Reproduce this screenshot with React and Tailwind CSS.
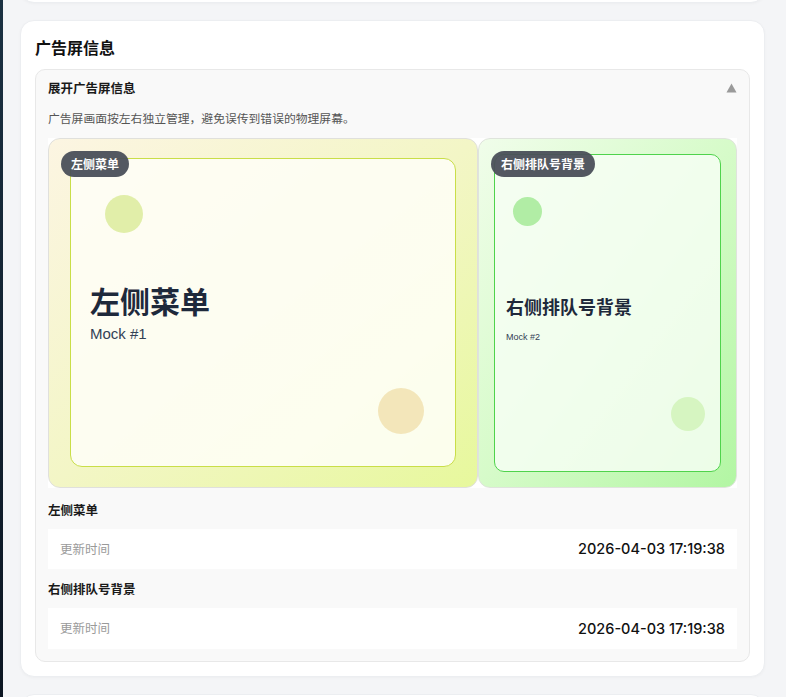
export default function App() {
  const cjk = { fontFamily: '"Noto Sans CJK SC", "Noto Sans", sans-serif' };
  return (
    <div className="flex min-h-[697px] w-[786px] overflow-hidden bg-[#f4f5f7]" style={cjk}>
      <div className="w-[3px] shrink-0 bg-gradient-to-b from-[#1b3142] to-[#0b1420]" />
      <div className="flex flex-1 flex-col gap-[17px] pl-[17px] pr-[21px]">
        <div className="-mt-[37px] h-[40px] rounded-[14px] border border-[#eceef1] bg-white shadow-[0_1px_3px_rgba(0,0,0,0.03)]" />
        <div className="rounded-[14px] border border-[#eceef1] bg-white px-[14px] pb-[14px] pt-[14px] shadow-[0_1px_3px_rgba(0,0,0,0.03)]">
          <div className="text-[16px] font-bold leading-[24px] text-[#111]">广告屏信息</div>
          <div className="mt-[10px] rounded-[10px] border border-[#e8e8e8] bg-[#f9f9f9] px-[12px] pb-[12px] pt-[10px]">
            <div className="flex items-center justify-between">
              <div className="text-[12.5px] font-bold leading-[16px] text-[#1a1a1a]">展开广告屏信息</div>
              <svg width="11" height="10" viewBox="0 0 11 10">
                <polygon points="5.5,0.5 10.5,9.5 0.5,9.5" fill="#9a9a9a" />
              </svg>
            </div>
            <div className="mt-[14px] text-[11.8px] leading-[16px] text-[#555]">
              广告屏画面按左右独立管理，避免误传到错误的物理屏幕。
            </div>
            <div className="mt-[12px] grid h-[350px] grid-cols-[430px_1fr] bg-white">
              {/* left panel */}
              <div className="relative rounded-[12px] border border-[#e0e0dc] bg-gradient-to-br from-[#fcf5e2] via-[#f3f6c6] to-[#e7f89c] px-[21px] pb-[20px] pt-[19px]">
                <div className="relative flex h-full flex-col justify-center overflow-hidden rounded-[12px] border-[1.5px] border-[#c9de48] bg-[#fefef5]/90 px-[19px]">
                  <div className="absolute left-[34px] top-[36px] h-[38px] w-[38px] rounded-full bg-[#e1eea9]" />
                  <div className="absolute bottom-[32px] right-[31px] h-[46px] w-[46px] rounded-full bg-[#f3e6ba]" />
                  <div className="relative text-[30px] font-bold leading-[36px] text-[#1e293b]">左侧菜单</div>
                  <div className="relative mt-[7px] text-[15px] leading-[18px] text-[#334155]" style={{ fontFamily: '"Liberation Sans", Arial, sans-serif' }}>
                    Mock #1
                  </div>
                </div>
                <div className="absolute left-[12px] top-[12px] rounded-full bg-[#4a4f58]/95 px-[10px] text-[12px] font-bold leading-[26px] text-white">
                  左侧菜单
                </div>
              </div>
              {/* right panel */}
              <div className="relative rounded-[12px] border border-[#dfe4dc] bg-gradient-to-br from-[#f0fdea] via-[#d6fbc9] to-[#b2f6a3] px-[15px] pb-[15px] pt-[15px]">
                <div className="relative flex h-full flex-col justify-center overflow-hidden rounded-[10px] border border-[#4fd34c] bg-[#f6fef3]/85 px-[11px] pt-[11px]">
                  <div className="absolute left-[18px] top-[42px] h-[29px] w-[29px] rounded-full bg-[#b1eda5]" />
                  <div className="absolute bottom-[40px] right-[15px] h-[34px] w-[34px] rounded-full bg-[#d6f5c1]" />
                  <div className="relative text-[18px] font-bold leading-[24px] text-[#1e293b]">右侧排队号背景</div>
                  <div className="relative mt-[13px] text-[9px] leading-[12px] text-[#334155]" style={{ fontFamily: '"Liberation Sans", Arial, sans-serif' }}>
                    Mock #2
                  </div>
                </div>
                <div className="absolute left-[12px] top-[12px] rounded-full bg-[#4a4f58]/95 px-[10px] text-[12px] font-bold leading-[26px] text-white">
                  右侧排队号背景
                </div>
              </div>
            </div>
            <div className="mt-[14px] text-[12.5px] font-bold leading-[16px] text-[#1a1a1a]">左侧菜单</div>
            <div className="mt-[11px] flex h-[40px] items-center justify-between bg-white px-[12px]">
              <span className="text-[12.5px] text-[#9a9a9a]">更新时间</span>
              <span className="text-[14.5px] font-medium text-[#111]" style={{ fontFamily: 'Inter, "Noto Sans", sans-serif' }}>
                2026-04-03 17:19:38
              </span>
            </div>
            <div className="mt-[12px] text-[12.5px] font-bold leading-[16px] text-[#1a1a1a]">右侧排队号背景</div>
            <div className="mt-[11px] flex h-[41px] items-center justify-between bg-white px-[12px]">
              <span className="text-[12.5px] text-[#9a9a9a]">更新时间</span>
              <span className="text-[14.5px] font-medium text-[#111]" style={{ fontFamily: 'Inter, "Noto Sans", sans-serif' }}>
                2026-04-03 17:19:38
              </span>
            </div>
          </div>
        </div>
        <div className="h-[60px] rounded-[14px] border border-[#eceef1] bg-white" />
      </div>
    </div>
  );
}
